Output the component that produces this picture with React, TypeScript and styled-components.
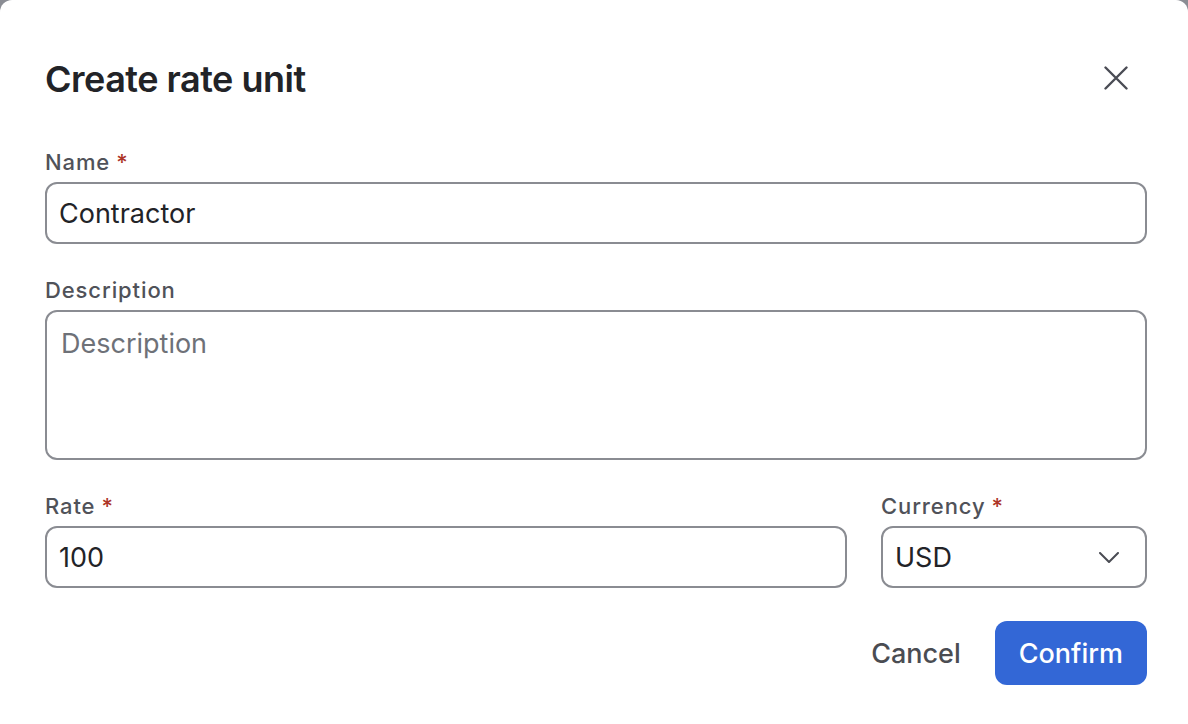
import React from "react";
import styled, { createGlobalStyle } from "styled-components";

const GlobalStyle = createGlobalStyle`
  html, body {
    margin: 0;
    padding: 0;
    background: #8b8d94;
    overflow: hidden;
  }
  * { box-sizing: border-box; }
  body {
    font-family: Inter, "Noto Sans", "Liberation Sans", sans-serif;
  }
`;

const Dialog = styled.div`
  width: 1188px;
  min-height: 740px;
  background: #ffffff;
  border-radius: 12px;
  padding: 47px 41px 0 45px;
  display: flex;
  flex-direction: column;
`;

const Header = styled.div`
  display: flex;
  align-items: center;
  justify-content: space-between;
  height: 62px;
  margin-bottom: 39px;
`;

const Title = styled.h1`
  margin: 0;
  padding-top: 2px;
  font-size: 36px;
  line-height: 44px;
  font-weight: 600;
  color: #222327;
  letter-spacing: -0.5px;
`;

const CloseButton = styled.button`
  width: 62px;
  height: 62px;
  border: none;
  background: transparent;
  display: flex;
  align-items: center;
  justify-content: center;
  padding: 0;
  cursor: pointer;
  color: #4a4c54;
`;

const Field = styled.div`
  display: flex;
  flex-direction: column;
  gap: 6px;
  margin-bottom: 32px;
  min-width: 0;
`;

const Label = styled.label`
  font-size: 22px;
  line-height: 28px;
  font-weight: 500;
  letter-spacing: 0.9px;
  color: #505259;
`;

const Required = styled.span`
  color: #ad3527;
  margin-left: 6px;
`;

const inputBase = `
  width: 100%;
  border: 2px solid #8a8c92;
  border-radius: 12px;
  background: #fff;
  font-family: Inter, "Noto Sans", "Liberation Sans", sans-serif;
  font-size: 27px;
  color: #222327;
  outline: none;
`;

const TextInput = styled.input`
  ${inputBase}
  height: 62px;
  padding: 0 12px;
`;

const TextArea = styled.textarea`
  ${inputBase}
  height: 150px;
  padding: 14px 14px;
  line-height: 36px;
  resize: none;
  &::placeholder {
    color: #6e7178;
  }
`;

const Row = styled.div`
  display: grid;
  grid-template-columns: 802px 1fr;
  column-gap: 34px;
`;

const SelectBox = styled.div`
  ${inputBase}
  height: 62px;
  padding: 0 26px 0 12px;
  display: flex;
  align-items: center;
  justify-content: space-between;
`;

const Footer = styled.div`
  display: flex;
  justify-content: flex-end;
  align-items: center;
  gap: 10px;
  margin-top: 1px;
`;

const Button = styled.button<{ $primary?: boolean }>`
  height: 64px;
  padding: 0 24px;
  border: none;
  border-radius: 12px;
  font-family: Inter, "Noto Sans", "Liberation Sans", sans-serif;
  font-size: 27px;
  font-weight: 500;
  background: ${(p) => (p.$primary ? "#3367d6" : "transparent")};
  color: ${(p) => (p.$primary ? "#ffffff" : "#4a4c52")};
  cursor: pointer;
`;

export default function App() {
  return (
    <>
      <GlobalStyle />
      <Dialog>
        <Header>
          <Title>Create rate unit</Title>
          <CloseButton aria-label="Close">
            <svg width="24" height="24" viewBox="0 0 24 24" fill="none">
              <path d="M1.5 1.5 L22.5 22.5 M22.5 1.5 L1.5 22.5" stroke="currentColor" strokeWidth="2.4" strokeLinecap="round" />
            </svg>
          </CloseButton>
        </Header>
        <Field>
          <Label>
            Name<Required>*</Required>
          </Label>
          <TextInput defaultValue="Contractor" />
        </Field>
        <Field>
          <Label>Description</Label>
          <TextArea placeholder="Description" />
        </Field>
        <Row>
          <Field>
            <Label>
              Rate<Required>*</Required>
            </Label>
            <TextInput defaultValue="100" />
          </Field>
          <Field>
            <Label>
              Currency<Required>*</Required>
            </Label>
            <SelectBox>
              <span>USD</span>
              <svg width="20" height="11" viewBox="0 0 20 11" fill="none">
                <path d="M1 1 L10 10 L19 1" stroke="#4a4c54" strokeWidth="2" strokeLinecap="round" strokeLinejoin="round" />
              </svg>
            </SelectBox>
          </Field>
        </Row>
        <Footer>
          <Button>Cancel</Button>
          <Button $primary>Confirm</Button>
        </Footer>
      </Dialog>
    </>
  );
}
